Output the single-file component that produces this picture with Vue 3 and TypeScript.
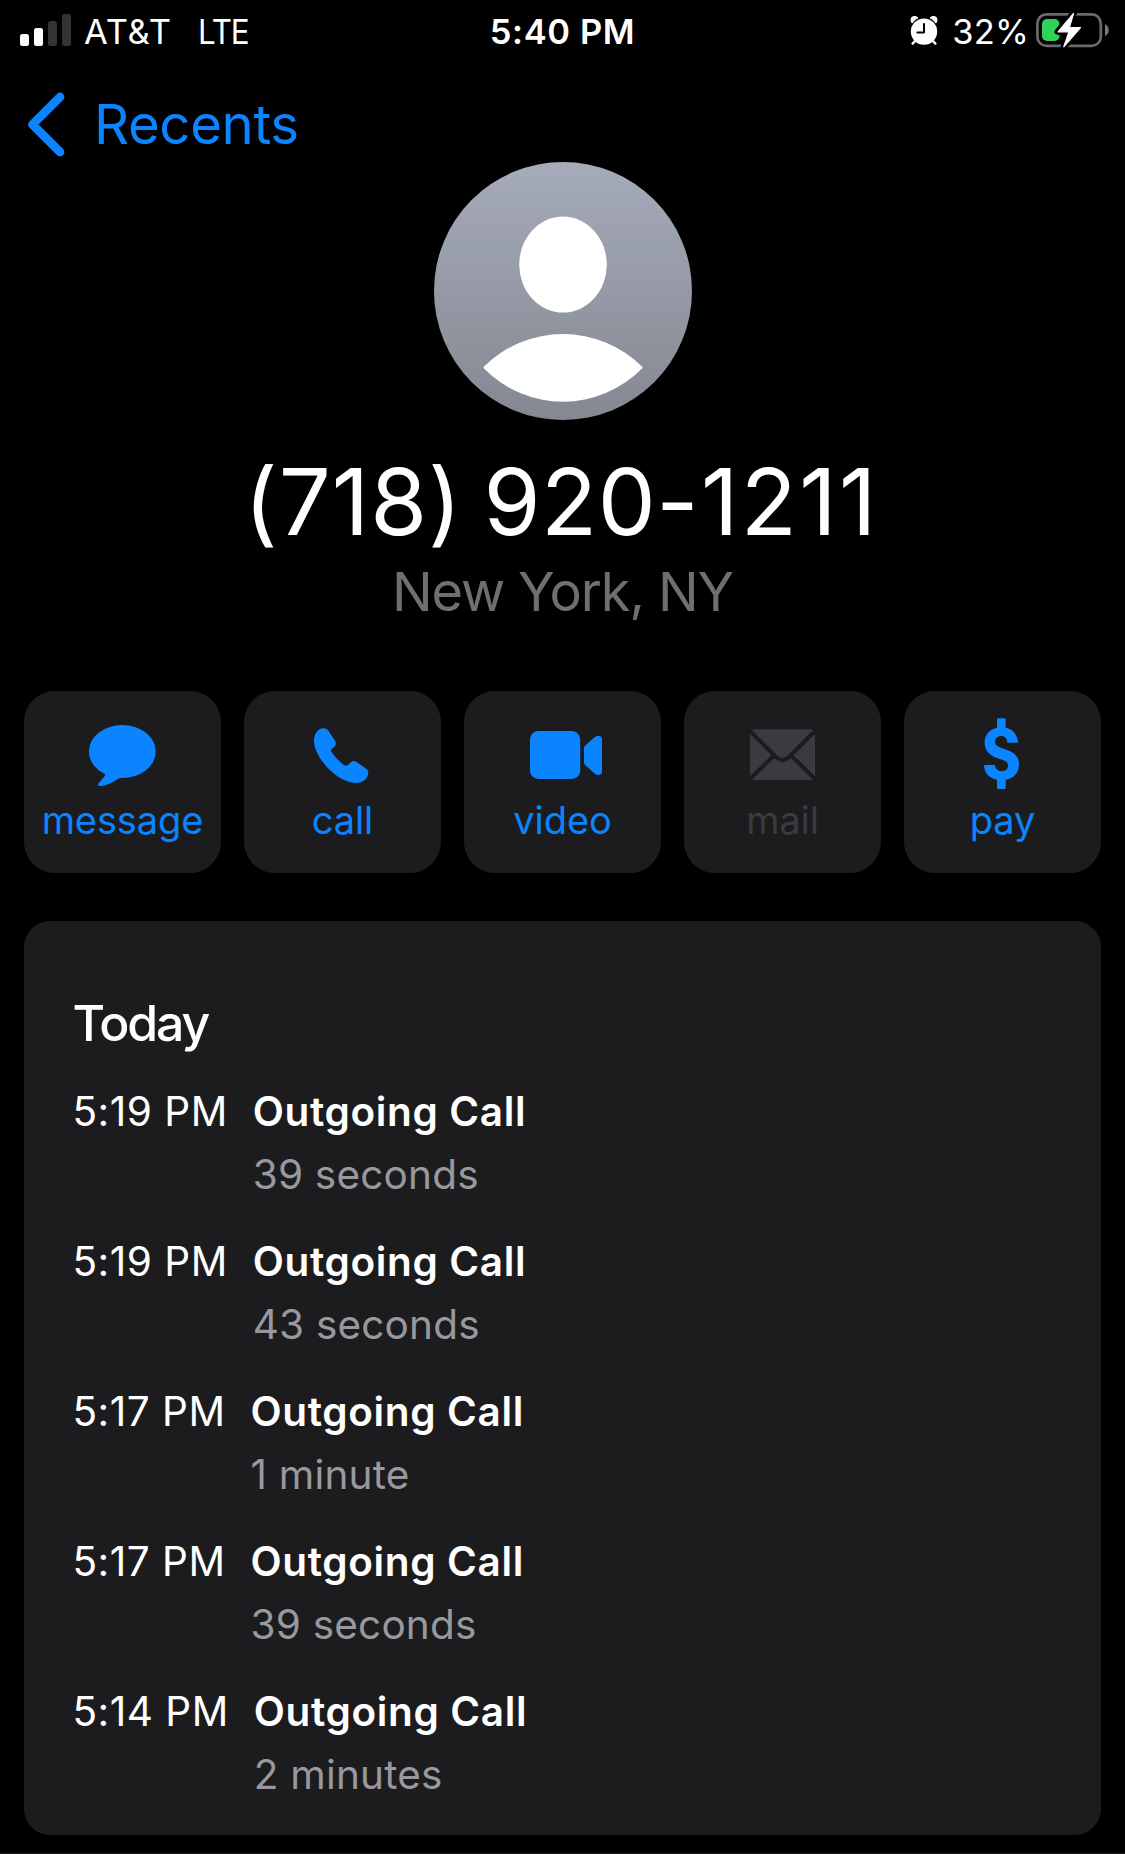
<script setup lang="ts">
interface Action {
  id: string
  label: string
  disabled?: boolean
}

interface CallEntry {
  time: string
  kind: string
  duration: string
}

const actions: Action[] = [
  { id: 'message', label: 'message' },
  { id: 'call', label: 'call' },
  { id: 'video', label: 'video' },
  { id: 'mail', label: 'mail', disabled: true },
  { id: 'pay', label: 'pay' },
]

const calls: CallEntry[] = [
  { time: '5:19 PM', kind: 'Outgoing Call', duration: '39 seconds' },
  { time: '5:19 PM', kind: 'Outgoing Call', duration: '43 seconds' },
  { time: '5:17 PM', kind: 'Outgoing Call', duration: '1 minute' },
  { time: '5:17 PM', kind: 'Outgoing Call', duration: '39 seconds' },
  { time: '5:14 PM', kind: 'Outgoing Call', duration: '2 minutes' },
]
</script>

<template>
  <div class="screen">
    <header class="status">
      <div class="status-left">
        <svg class="signal" width="51" height="32" viewBox="0 0 51 32">
          <rect x="0" y="20" width="9" height="12" rx="2.5" fill="#fff" />
          <rect x="14" y="14" width="9" height="18" rx="2.5" fill="#fff" />
          <rect x="28" y="7" width="9" height="25" rx="2.5" fill="#333" />
          <rect x="42" y="0" width="9" height="32" rx="2.5" fill="#333" />
        </svg>
        <span class="carrier">AT&amp;T</span>
        <span class="network">LTE</span>
      </div>
      <div class="clock">5:40 PM</div>
      <div class="status-right">
        <svg class="alarm" width="28" height="30" viewBox="0 0 28 30">
          <circle cx="4.6" cy="4" r="4" fill="#fff" />
          <circle cx="23.4" cy="4" r="4" fill="#fff" />
          <circle cx="14" cy="15.6" r="14.4" fill="#000" />
          <path d="M5.5 24.5 2.6 27.6M22.5 24.5l2.9 3.1" stroke="#fff" stroke-width="2.4" stroke-linecap="round" />
          <circle cx="14" cy="15.6" r="13.2" fill="#fff" />
          <path d="M14 8v8.4H7.4" fill="none" stroke="#000" stroke-width="2" stroke-linecap="round" stroke-linejoin="round" />
        </svg>
        <span class="percent">32%</span>
        <svg class="battery" width="74" height="38" viewBox="0 0 74 38">
          <rect x="1.4" y="3.4" width="63.4" height="31.4" rx="9" fill="none" stroke="#6a6a6a" stroke-width="2.7" />
          <path d="M69 13c5 2.6 5 9.6 0 12.2z" fill="#7a7a7a" />
          <rect x="6" y="8" width="17.5" height="22" rx="5" fill="#30d158" />
          <path d="M38 1.5 21.5 20.8h11L27.5 36.5 45 16.7H33.8z" fill="#000" stroke="#000" stroke-width="6" stroke-linejoin="round" />
          <path d="M37.5 2.5 22 20.8h11L27.8 35.8 44.5 16.7H33.4z" fill="#fff" stroke="#fff" stroke-width="1.2" stroke-linejoin="round" />
        </svg>
      </div>
    </header>

    <nav class="nav">
      <svg width="38" height="65" viewBox="0 0 38 65">
        <path d="M33 5 5.5 32.5 33 60" fill="none" stroke="#0a84ff" stroke-width="8.8" stroke-linecap="round" stroke-linejoin="round" />
      </svg>
      <span class="back">Recents</span>
    </nav>

    <section class="contact">
      <svg class="avatar" width="258" height="258" viewBox="0 0 258 258">
        <defs>
          <linearGradient id="avatarFill" x1="0" y1="0" x2="0" y2="1">
            <stop offset="0" stop-color="#a6abba" />
            <stop offset="1" stop-color="#848891" />
          </linearGradient>
        </defs>
        <circle cx="129" cy="129" r="129" fill="url(#avatarFill)" />
        <ellipse cx="129" cy="102.6" rx="43.8" ry="48" fill="#fff" />
        <path d="M50 206.6Q49 205.6 50 204.6A112 112 0 0 1 208 204.6Q209 205.6 208 206.6A111 111 0 0 1 50 206.6z" fill="#fff" />
      </svg>
      <h1 class="number"><span class="area">(718)</span> 920<span class="line">-1211</span></h1>
      <p class="city">New York, NY</p>
    </section>

    <section class="actions">
      <button v-for="a in actions" :key="a.id" class="action" :class="[a.id, { disabled: a.disabled }]">
        <svg width="197" height="110" viewBox="0 0 197 110" fill="currentColor">
          <g v-if="a.id === 'message'">
            <ellipse cx="98.3" cy="60.5" rx="33.4" ry="26.5" />
            <path d="M80 80C83 83 81 84.5 79.5 86.5L74.7 92C73 94 74.5 95.3 77 95C83 94.5 89 91.5 94.5 87.5Q96 86.7 98 87z" />
          </g>
          <path
            v-else-if="a.id === 'call'"
            d="M79.3 37.3C81.5 37.3 83.2 38.2 84.5 40L91 49.7C92.3 51.8 92 54 90.5 55.5L87.5 58.3C86.7 59.1 86.9 60 87.6 61C91 66 95.5 70.6 100.2 74.2C101.3 75 102.5 75 103.5 74.2L107 71.2C108.5 69.9 110.5 69.7 112.3 70.8L122.5 78C124 79.2 124.4 80.5 124.3 82.5C123.8 88 118 92 112 92C93 92 70 66 70 50C70 43 74 37.3 79.3 37.3z"
          />
          <g v-else-if="a.id === 'video'">
            <rect x="66" y="40" width="50.2" height="48" rx="8.5" />
            <path d="M120 57Q120 55.5 121.2 54.5L130.5 46.3Q132.3 44.7 134.5 44.7Q138 44.7 138 48.5V80Q138 84 134.5 84Q132.3 84 130.5 82.4L121.2 74Q120 73 120 71.5z" />
          </g>
          <g v-else-if="a.id === 'mail'">
            <rect x="66" y="38.3" width="65" height="50.7" rx="4.5" />
            <path
              d="M63.9 38 92.5 66.5Q98.5 71.7 104.5 66.5L133.1 38M90.5 64 65 89M106.5 64 132 89"
              fill="none"
              stroke="#1c1c1e"
              stroke-width="4"
            />
          </g>
          <g v-else>
            <path d="M114 51.7C113.5 42 107 36.2 97.5 36.2C87.5 36.2 80.6 42.5 80.6 51.5C80.6 59.5 85.5 64.3 93 67L99.5 69.2C102.8 70.4 104 72 104 74.7C104 78 101.5 80.2 97.7 80.2C94 80.2 91.3 77.8 91 74H80C80 83 86.8 89.2 97.6 89.2C108.5 89.2 115 82.8 115 73.3C115 65.8 110.8 61.5 103 58.9L96.8 56.8C92.8 55.4 91 53.6 91 50.8C91 47.2 93.5 44.9 97.3 44.9C100.8 44.9 103.2 47.3 103.4 51.7z" />
            <rect x="93" y="27.3" width="8.7" height="12" rx="1" />
            <rect x="93" y="86" width="8.7" height="12" rx="1" />
          </g>
        </svg>
        <span class="action-label">{{ a.label }}</span>
      </button>
    </section>

    <section class="log">
      <h2 class="day">Today</h2>
      <ul class="calls">
        <li v-for="(c, i) in calls" :key="i" class="call-row">
          <span class="time">{{ c.time }}</span>
          <div class="detail">
            <span class="kind">{{ c.kind }}</span>
            <span class="duration">{{ c.duration }}</span>
          </div>
        </li>
      </ul>
    </section>

    <div class="next"></div>
  </div>
</template>

<style>
html,
body {
  background: #000;
  overflow: hidden;
}
</style>

<style scoped>
.screen {
  width: 1125px;
  height: 1854px;
  overflow: hidden;
  background: #000;
  color: #fff;
  font-family: Inter, 'Liberation Sans', sans-serif;
  font-weight: 400;
}

.screen svg {
  display: block;
  flex: none;
}

.status {
  display: grid;
  grid-template-columns: 1fr auto 1fr;
  height: 63px;
  line-height: 63px;
  font-size: 34.5px;
  white-space: nowrap;
}

.status-left,
.status-right {
  display: flex;
}

.status-left {
  padding-left: 20px;
}

.signal {
  margin-top: 14px;
}

.carrier {
  margin-left: 13px;
  letter-spacing: 0.8px;
}

.network {
  margin-left: 26px;
  letter-spacing: -1.2px;
  transform: scaleX(0.91);
  transform-origin: left;
}

.clock {
  font-weight: 600;
  letter-spacing: 0.6px;
}

.status-right {
  justify-content: flex-end;
  padding-right: 15px;
}

.alarm {
  margin-top: 16px;
}

.percent {
  margin-left: 14px;
  letter-spacing: 0.2px;
}

.battery {
  margin: 11px 0 0 7px;
}

.nav {
  display: flex;
  align-items: center;
  height: 76px;
  padding: 23px 0 0 27px;
  color: #0a84ff;
  font-size: 54.5px;
  line-height: 76px;
}

.back {
  margin-left: 29px;
  letter-spacing: -0.35px;
}

.contact {
  display: flex;
  flex-direction: column;
  align-items: center;
}

.number {
  margin: 25px 0 0;
  padding-right: 2px;
  font-size: 92px;
  font-weight: 400;
  line-height: 113px;
  letter-spacing: 0.5px;
  word-spacing: -5.5px;
  white-space: nowrap;
  font-feature-settings: 'calt' 0;
}

.area {
  letter-spacing: 1px;
}

.line {
  letter-spacing: 2.4px;
}

.city {
  margin: 0;
  color: #6f6f6f;
  font-size: 54px;
  line-height: 67px;
  letter-spacing: -1.1px;
}

.actions {
  display: flex;
  gap: 23px;
  margin: 66px 24px 0;
}

.action {
  display: flex;
  flex-direction: column;
  align-items: center;
  width: 197px;
  height: 182px;
  padding: 0;
  border: 0;
  border-radius: 31px;
  background: #1c1c1e;
  color: #0a84ff;
  font-family: inherit;
  font-size: 38px;
  line-height: 38px;
}

.action-label {
  letter-spacing: -0.1px;
}

.disabled {
  color: #3b3b3f;
}

.log {
  box-sizing: border-box;
  height: 914px;
  margin: 48px 24px 0;
  padding: 72px 48.5px 0;
  border-radius: 26px;
  background: #1c1c1e;
}

.day {
  margin: 0;
  font-size: 50px;
  font-weight: 450;
  line-height: 60px;
  letter-spacing: -2.1px;
}

.calls {
  display: flex;
  flex-direction: column;
  gap: 24px;
  margin: 27px 0 0;
  padding: 0;
  list-style: none;
}

.call-row {
  display: flex;
  font-size: 40.5px;
  line-height: 63px;
}

.time {
  letter-spacing: 0.5px;
}

.detail {
  display: flex;
  flex-direction: column;
  margin-left: 25px;
}

.kind {
  font-weight: 600;
  letter-spacing: 0.65px;
}

.duration {
  color: #98989f;
  letter-spacing: 0.2px;
}

.next {
  height: 1px;
  margin-top: 18px;
  background: #1c1c1e;
}
</style>
